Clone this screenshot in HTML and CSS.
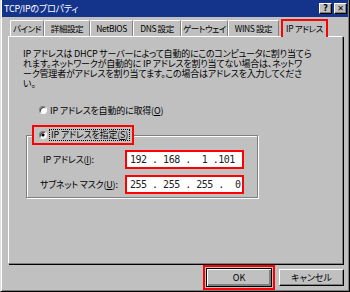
FILE: index.html
```html
<!DOCTYPE html>
<html lang="ja">
<head>
    <meta charset="UTF-8">
    <title>TCP/IPのプロパティ</title>
    <link rel="stylesheet" href="styles.css">
</head>
<body>
    <div class="window">
        <div class="titlebar">
            <span class="title">TCP/IPのプロパティ</span>
            <div class="title-btns">
                <span class="tbtn">?</span>
                <span class="tbtn">&#x2715;</span>
            </div>
        </div>

        <!-- Tabs -->
        <div class="tabs">
            <div class="tab t1">バインド</div>
            <div class="tab t2">詳細設定</div>
            <div class="tab t3">NetBIOS</div>
            <div class="tab t4">DNS 設定</div>
            <div class="tab t5">ゲートウェイ</div>
            <div class="tab t6">WINS 設定</div>
            <div class="tab active">IP アドレス</div>
        </div>

        <div class="panel">
            <p class="desc">IP アドレスは DHCP サーバーによって自動的にこのコンピュータに割り当てら<br>れます。ネットワークが自動的に IP アドレスを割り当てない場合は、ネットワ<br>ーク管理者がアドレスを割り当てます。この場合はアドレスを入力してくださ<br>い。</p>

            <div class="radio first">
                <span class="dot"></span>
                <span>IP アドレスを自動的に取得(<u>O</u>)</span>
            </div>

            <fieldset class="group">
                <legend class="mark">
                    <span class="dot on"></span>
                    <span class="focus">IP アドレスを指定(<u>S</u>)</span>
                </legend>
                <div class="fields">
                    <span class="label ip">IP アドレス(<u>I</u>):</span>
                    <span class="ipbox">192 . 168 .  1 .101</span>
                    <span class="label">サブネット マスク(<u>U</u>):</span>
                    <span class="ipbox">255 . 255 . 255 .  0</span>
                </div>
            </fieldset>
        </div>

        <div class="buttons">
            <button class="btn ok">OK</button>
            <button class="btn">キャンセル</button>
        </div>
    </div>
</body>
</html>
```

FILE: styles.css
```css
body {
    margin: 0;
    background: #c0c0c0;
}

.window {
    width: 350px;
    height: 292px;
    box-sizing: border-box;
    background: #c0c0c0;
    border: 1px solid;
    border-color: #dfdfdf #000 #000 #dfdfdf;
    border-top: none;
    box-shadow: inset 1px 0 #fff, inset -1px -1px #808080;
    padding: 0 1px 1px 1px;
    font-family: "Noto Sans CJK JP", sans-serif;
    font-size: 9px;
    font-feature-settings: "palt";
    letter-spacing: -0.2px;
    color: #000;
    display: flex;
    flex-direction: column;
}

/* Title bar */
.titlebar {
    height: 17px;
    flex: none;
    background: #14348c;
    color: #fff;
    display: flex;
    justify-content: space-between;
    align-items: center;
    padding: 0 1px 0 2px;
}

.title {
    font-size: 9px;
    line-height: 10px;
}

.title-btns {
    display: flex;
    gap: 2px;
}

.tbtn {
    width: 13px;
    height: 11px;
    box-sizing: border-box;
    background: #c0c0c0;
    color: #000;
    border: 1px solid;
    border-color: #fff #000 #000 #fff;
    box-shadow: inset -1px -1px #808080;
    font-family: "DejaVu Sans", sans-serif;
    font-weight: bold;
    font-size: 8px;
    line-height: 9px;
    letter-spacing: 0;
    text-align: center;
}

/* Tabs */
.tabs {
    height: 18px;
    flex: none;
    margin-top: 1px;
    padding-left: 8px;
    display: flex;
    align-items: flex-end;
}

.tab {
    height: 16px;
    box-sizing: border-box;
    border-top: 1px solid #fff;
    border-left: 1px solid #fff;
    border-right: 1px solid #808080;
    border-radius: 2px 2px 0 0;
    text-align: center;
    font-size: 8.5px;
    letter-spacing: -0.4px;
    line-height: 14px;
    white-space: nowrap;
}

.t1 { width: 34px; }
.t2 { width: 46px; }
.t3 { width: 43px; }
.t4 { width: 48px; }
.t5 { width: 47px; }
.t6 { width: 51px; }

.tab.active {
    width: 47px;
    height: 18px;
    margin-left: 2px;
    margin-bottom: -1px;
    position: relative;
    z-index: 1;
    background: #c0c0c0;
    border: 2px solid #f00;
    border-bottom: none;
    border-radius: 0;
    line-height: 15px;
}

/* Panel */
.panel {
    width: 335px;
    height: 228px;
    flex: none;
    box-sizing: border-box;
    margin-left: 6px;
    border: 1px solid;
    border-color: #fff #808080 #808080 #fff;
    box-shadow: 1px 1px 0 #000;
    padding: 12px 0 0 14px;
}

.desc {
    margin: 0;
    line-height: 10px;
    white-space: nowrap;
}

.radio {
    display: flex;
    align-items: center;
    gap: 3px;
    height: 12px;
    margin: 15px 0 0 16px;
}

.dot {
    width: 8px;
    height: 8px;
    box-sizing: border-box;
    border-radius: 50%;
    background: #fff;
    border: 1px solid;
    border-color: #808080 #fff #fff #808080;
    box-shadow: inset 1px 1px #404040;
    flex: none;
}

.dot.on {
    background: radial-gradient(circle, #000 1.3px, #fff 1.8px);
}

/* Group box */
.group {
    width: 232px;
    box-sizing: border-box;
    margin: 9px 0 0 3px;
    padding: 0 0 3px 0;
    border: 1px solid #808080;
    box-shadow: 1px 1px 0 #fff, inset 1px 1px 0 #fff;
}

.group legend {
    display: flex;
    align-items: center;
    gap: 3px;
    height: 16px;
    margin-left: 5px;
    padding: 0 3px 0 5px;
    background: #c0c0c0;
}

.mark {
    border: 2px solid #f00;
}

.focus {
    outline: 1px dotted #000;
    padding: 0 1px;
    line-height: 10px;
}

.fields {
    display: grid;
    grid-template-columns: 85px 119px;
    row-gap: 6px;
    align-items: center;
    padding: 5px 0 0 13px;
}

.label {
    white-space: nowrap;
}

.label.ip {
    margin-left: 3px;
}

.ipbox {
    height: 19px;
    box-sizing: border-box;
    border: 2px solid #f00;
    background: #fff;
    padding-left: 3px;
    font-family: "DejaVu Sans Mono", monospace;
    font-size: 10px;
    letter-spacing: -0.5px;
    line-height: 15px;
    color: #222;
    white-space: pre;
}

/* Bottom buttons */
.buttons {
    display: flex;
    justify-content: flex-end;
    align-items: center;
    gap: 7px;
    height: 19px;
    margin-top: 4px;
    padding-right: 4px;
}

.btn {
    width: 65px;
    height: 17px;
    box-sizing: border-box;
    padding: 0;
    background: #c0c0c0;
    border: 1px solid;
    border-color: #fff #000 #000 #fff;
    box-shadow: inset -1px -1px #808080;
    font-family: "Noto Sans CJK JP", sans-serif;
    font-size: 9px;
    font-feature-settings: "palt";
    color: #000;
}

.btn.ok {
    width: 66px;
    height: 19px;
    border: 1px solid #000;
    box-shadow: inset 1px 1px #fff, inset -2px -2px #808080, inset -1px -1px #000;
    outline: 2px solid #f00;
    outline-offset: 1px;
}
```
